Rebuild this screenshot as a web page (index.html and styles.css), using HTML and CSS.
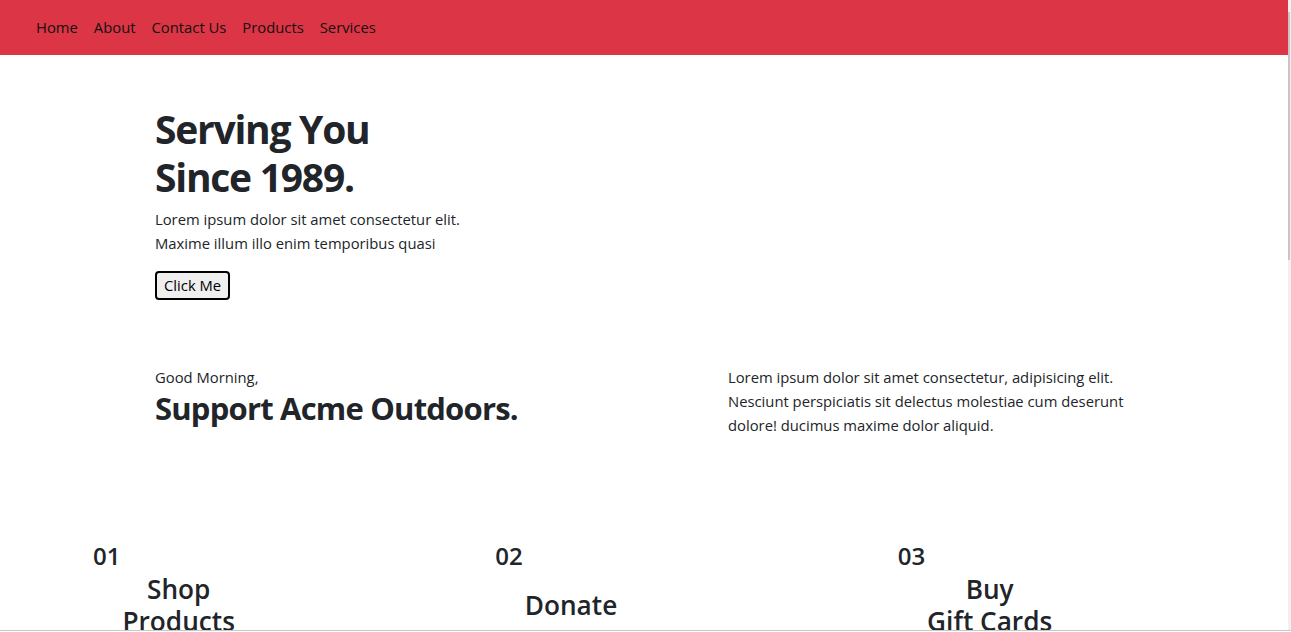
FILE: index.html
```html
<!DOCTYPE html>
<html lang="en">
<head>
<meta charset="utf-8">
<title>Acme Outdoors</title>
<link rel="stylesheet" href="styles.css">
</head>
<body>
<div class="frame">
  <div class="page">
    <nav class="navbar">
      <a class="nav-link" href="#">Home</a>
      <a class="nav-link" href="#">About</a>
      <a class="nav-link" href="#">Contact Us</a>
      <a class="nav-link" href="#">Products</a>
      <a class="nav-link" href="#">Services</a>
    </nav>

    <section class="hero">
      <h1 class="hero-title">Serving You<br>Since 1989.</h1>
      <p class="hero-text">Lorem ipsum dolor sit amet consectetur elit.<br>Maxime illum illo enim temporibus quasi</p>
      <button class="btn" type="button">Click Me</button>
    </section>

    <section class="support">
      <div class="support-left">
        <p class="greeting">Good Morning,</p>
        <h2 class="support-title">Support Acme Outdoors.</h2>
      </div>
      <div class="support-right">
        <p>Lorem ipsum dolor sit amet consectetur, adipisicing elit. Nesciunt perspiciatis sit delectus molestiae cum deserunt dolore! ducimus maxime dolor aliquid.</p>
      </div>
    </section>

    <section class="features">
      <div class="feature">
        <span class="num">01</span>
        <h3 class="feature-title">Shop<br>Products</h3>
      </div>
      <div class="feature">
        <span class="num">02</span>
        <h3 class="feature-title">Donate</h3>
      </div>
      <div class="feature">
        <span class="num">03</span>
        <h3 class="feature-title">Buy<br>Gift Cards</h3>
      </div>
    </section>
  </div>
  <div class="scrollbar"><div class="thumb"></div></div>
</div>
<div class="bottom-line"></div>
</body>
</html>
```

FILE: styles.css
```css
html, body {
  margin: 0;
  padding: 0;
  height: 632px;
  overflow: hidden;
  background: #fff;
}

body {
  font-family: "Open Sans", "Noto Sans", "Liberation Sans", sans-serif;
  font-size: 16px;
  line-height: 1.5;
  color: #212529;
}

.frame {
  display: flex;
  height: 630px;
  overflow: hidden;
}

.page {
  flex: 1;
  min-width: 0;
}

.scrollbar {
  width: 3px;
  background: #f0f0f0;
  padding-top: 12px;
}

.thumb {
  width: 2px;
  height: 248px;
  background: #c6c6c6;
}

.bottom-line {
  height: 1px;
  background: #c8c8c8;
}

.navbar {
  background: #dc3545;
  height: 55px;
  display: flex;
  align-items: center;
  padding: 0 0 2px 28px;
  box-sizing: border-box;
}

.nav-link {
  color: #111;
  text-decoration: none;
  font-size: 14.8px;
  padding: 0 8px;
  line-height: 24px;
}

.hero {
  padding: 50px 0 0 155px;
}

.hero-title {
  margin: 0 0 6px;
  font-size: 39px;
  line-height: 48px;
  font-weight: 700;
  letter-spacing: -1.25px;
}

.hero-text {
  margin: 0 0 16px;
  font-size: 14.8px;
  line-height: 24px;
}

.btn {
  font-family: inherit;
  font-size: 14.8px;
  line-height: 21px;
  padding: 2px 7px 2px;
  background: #efefef;
  color: #000;
  border: 2px solid #000;
  border-radius: 4px;
}

.support {
  display: flex;
  padding: 65px 0 0 155px;
}

.support-left {
  width: 573px;
}

.greeting {
  margin: 0;
  font-size: 14.8px;
  line-height: 24px;
}

.support-title {
  margin: 1px 0 0;
  font-size: 31px;
  line-height: 37px;
  font-weight: 700;
  letter-spacing: -0.8px;
}

.support-right {
  width: 410px;
}

.support-right p {
  margin: 0;
  font-size: 14.8px;
  line-height: 24px;
}

.features {
  display: grid;
  grid-template-columns: repeat(3, 1fr);
  padding: 103px 0 0 81px;
}

.feature {
  display: flex;
  align-items: flex-start;
  padding: 0 12px;
}

.num {
  font-size: 24px;
  line-height: 31px;
  font-weight: 600;
  color: #212529;
}

.feature-title {
  margin: 33px 0 0 2px;
  min-height: 64px;
  display: flex;
  flex-direction: column;
  justify-content: center;
  text-align: center;
  font-size: 26.2px;
  line-height: 32px;
  font-weight: 600;
}
```
